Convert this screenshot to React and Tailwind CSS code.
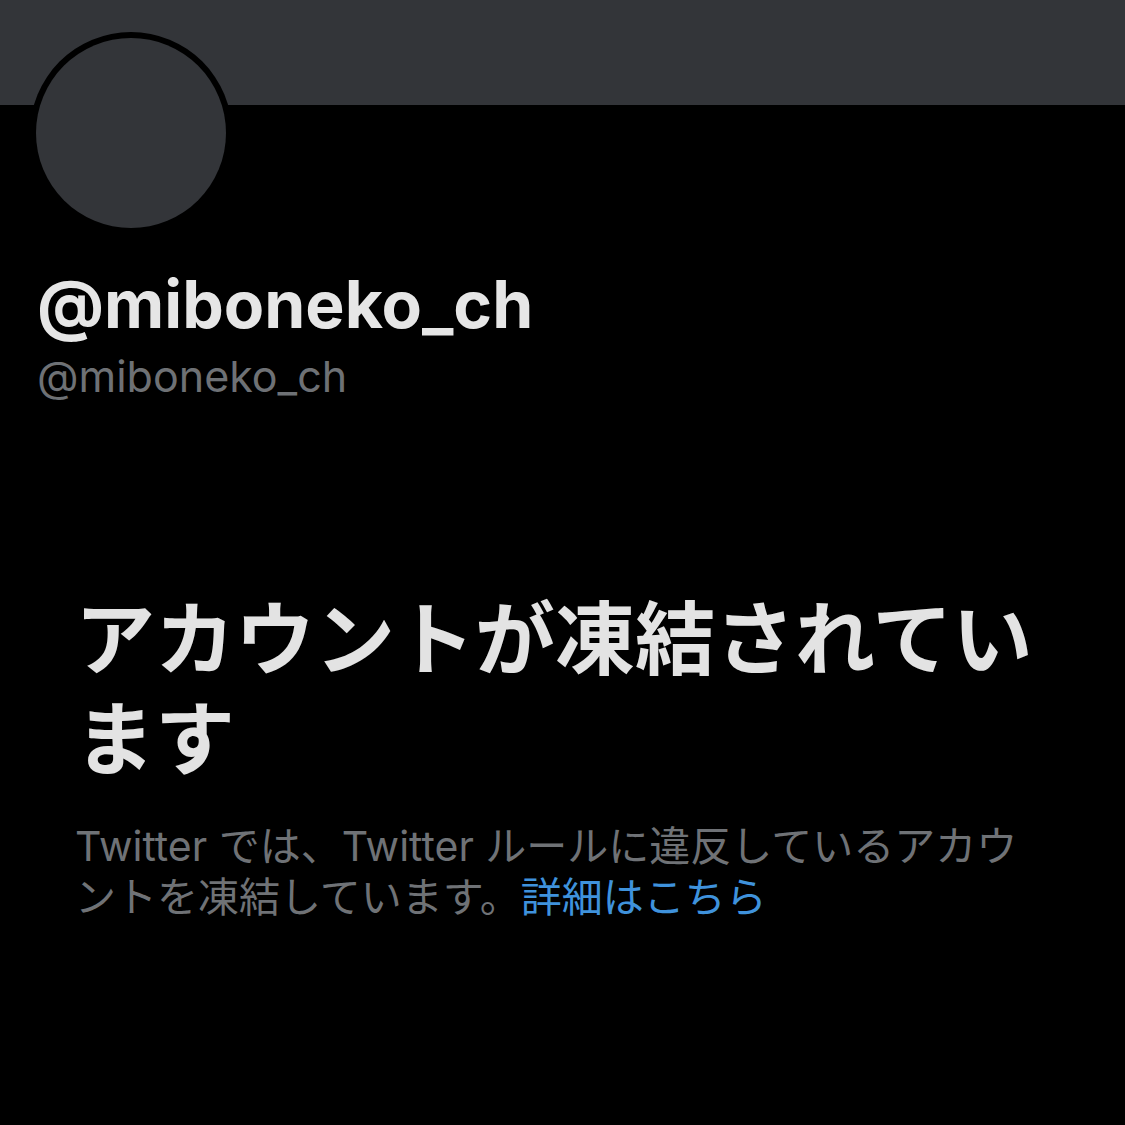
import React from "react";

const App = () => {
  return (
    <div className="w-[1125px] h-[1125px] bg-black overflow-hidden font-['Inter','Noto_Sans_CJK_JP',sans-serif]">
      {/* Banner */}
      <div className="h-[105px] bg-[#333539]" />

      {/* Profile header */}
      <div className="px-[30px]">
        <div className="-mt-[73px] w-[202px] h-[202px] rounded-full bg-black p-[6px]">
          <div className="w-full h-full rounded-full bg-[#333539]" />
        </div>

        <div className="pl-[7px] mt-[30px]">
          <div className="text-[66px] leading-[80px] font-bold text-[#e6e6e6]">
            @miboneko_ch
          </div>
          <div className="text-[43px] leading-[52px] text-[#6e7175] mt-[6px]">
            @miboneko_ch
          </div>
        </div>
      </div>

      {/* Suspended notice */}
      <div className="pl-[75px] mt-[181px] w-[1050px]">
        <h1 className="text-[80px] leading-[100px] font-bold text-[#e3e3e3] font-['Noto_Sans_CJK_JP',sans-serif]">
          アカウントが凍結されています
        </h1>
        <p className="mt-[38px] text-[41px] leading-[51px] text-[#6f7276] font-['Inter','Noto_Sans_CJK_JP',sans-serif]">
          Twitter では、Twitter ルールに違反しているアカウントを凍結しています。<span className="text-[#3f92dc]">詳細はこちら</span>
        </p>
      </div>
    </div>
  );
};

export default App;
